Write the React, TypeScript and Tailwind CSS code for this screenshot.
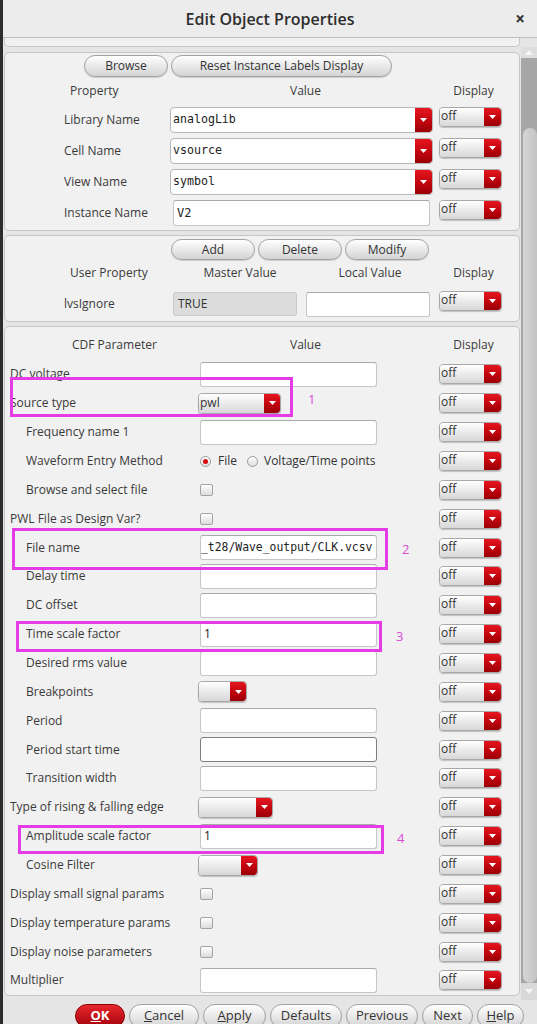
import React from "react";

const SANS = "font-['Open_Sans','DejaVu_Sans',sans-serif]";
const MONO = "font-['DejaVu_Sans_Mono','Liberation_Mono',monospace]";

const RedArrow = ({ className = "" }: { className?: string }) => (
  <div
    className={`flex shrink-0 items-center justify-center rounded-r-[3px] bg-linear-to-b from-[#e6161f] via-[#c4060f] to-[#9b0007] ${className}`}>
    <svg width="7" height="4" viewBox="0 0 7 4">
      <path d="M0 0H7L3.5 4Z" fill="#fff" />
    </svg>
  </div>
);

// the little "off" selector used in every Display column
const OffCombo = ({ className = "" }: { className?: string }) => (
  <div
    className={`flex h-[20px] w-[63px] shrink-0 overflow-hidden rounded-[4px] border border-[#a8a8a8] shadow-[0_1px_1px_rgba(0,0,0,0.2)] ${className}`}>
    <div className="flex-1 bg-linear-to-b from-white to-[#d7d7d7] pl-[1px] text-[12px] leading-[15px] text-[#333]">off</div>
    <RedArrow className="w-[17px]" />
  </div>
);

const SmallCombo = ({ text = "", w }: { text?: string; w: string }) => (
  <div
    className={`flex h-[21px] shrink-0 overflow-hidden rounded-[4px] border border-[#a8a8a8] shadow-[0_1px_1px_rgba(0,0,0,0.2)] ${w}`}>
    <div className="flex-1 bg-linear-to-b from-white to-[#d7d7d7] pl-[1px] text-[12px] leading-[17px] text-[#333]">
      {text}
    </div>
    <RedArrow className="w-[16px]" />
  </div>
);

const ValueCombo = ({ text }: { text: string }) => (
  <div className="flex h-[26px] w-[263px] shrink-0 overflow-hidden rounded-[4px] border border-[#b7b7b7] bg-white">
    <div className={`flex flex-1 items-center pl-[2px] text-[11.6px] text-[#222] ${MONO}`}>{text}</div>
    <RedArrow className="w-[17px]" />
  </div>
);

const Field = ({
  text = "",
  mono = false,
  focus = false,
  className = "",
}: {
  text?: string;
  mono?: boolean;
  focus?: boolean;
  className?: string;
}) => (
  <div
    className={`flex h-[25px] shrink-0 items-center overflow-hidden whitespace-nowrap rounded-[3px] border bg-white text-[#222] ${
      focus ? "border-[#7d7d7d]" : "border-[#c6c6c6] border-t-[#a9a9a9]"
    } ${mono ? `${MONO} text-[11.4px]` : "text-[12px]"} ${className}`}>
    {text}
  </div>
);

const Check = () => (
  <div className="ml-[2px] h-[12px] w-[13px] rounded-[2px] border border-[#a3a3a3] bg-linear-to-b from-white to-[#dcdcdc]" />
);

const Radio = ({ on = false }: { on?: boolean }) => (
  <div className="flex h-[11px] w-[11px] items-center justify-center rounded-full border border-[#9a9a9a] bg-linear-to-b from-white to-[#dedede]">
    {on && <div className="h-[5px] w-[5px] rounded-full bg-[#d30a12]" />}
  </div>
);

const Pill = ({ children, className = "" }: { children: React.ReactNode; className?: string }) => (
  <div
    className={`flex shrink-0 items-center justify-center rounded-[11px] border border-[#a2a2a2] bg-linear-to-b from-white to-[#d4d4d4] text-[#333] shadow-[0_1px_1px_rgba(0,0,0,0.15)] ${className}`}>
    {children}
  </div>
);

const field = <Field className="ml-[2px] w-[177px]" />;
const check = <Check />;

const cdfRows: { label: string; indent?: boolean; value: React.ReactNode }[] = [
  { label: "DC voltage", value: field },
  { label: "Source type", value: <SmallCombo text="pwl" w="w-[83px]" /> },
  { label: "Frequency name 1", indent: true, value: field },
  {
    label: "Waveform Entry Method",
    indent: true,
    value: (
      <div className="ml-[2px] flex items-center text-[12px] text-[#333]">
        <Radio on />
        <span className="ml-[7px]">File</span>
        <div className="ml-[10px]">
          <Radio />
        </div>
        <span className="ml-[6px]">Voltage/Time points</span>
      </div>
    ),
  },
  { label: "Browse and select file", indent: true, value: check },
  { label: "PWL File as Design Var?", value: check },
  {
    label: "File name",
    indent: true,
    value: <Field className="ml-[2px] w-[177px]" mono text="_t28/Wave_output/CLK.vcsv" />,
  },
  { label: "Delay time", indent: true, value: field },
  { label: "DC offset", indent: true, value: field },
  { label: "Time scale factor", indent: true, value: <Field className="ml-[2px] w-[177px] pl-[3px]" text="1" /> },
  { label: "Desired rms value", indent: true, value: field },
  { label: "Breakpoints", indent: true, value: <SmallCombo w="w-[49px]" /> },
  { label: "Period", indent: true, value: field },
  { label: "Period start time", indent: true, value: <Field className="ml-[2px] w-[177px]" focus /> },
  { label: "Transition width", indent: true, value: field },
  { label: "Type of rising & falling edge", value: <SmallCombo w="w-[75px]" /> },
  {
    label: "Amplitude scale factor",
    indent: true,
    value: <Field className="ml-[2px] w-[177px] pl-[3px]" text="1" />,
  },
  { label: "Cosine Filter", indent: true, value: <SmallCombo w="w-[60px]" /> },
  { label: "Display small signal params", value: check },
  { label: "Display temperature params", value: check },
  { label: "Display noise parameters", value: check },
  { label: "Multiplier", value: field },
];

const App = () => {
  return (
    <div className={`flex h-[1024px] w-[537px] overflow-hidden bg-[#e5e5e5] text-[#3a3a3a] ${SANS}`}>
      <div className="w-[3px] shrink-0 bg-[#2c2c2c]" />
      <div className="flex min-w-0 flex-1 flex-col">
        {/* title bar */}
        <div className="grid h-[38px] shrink-0 grid-cols-[1fr_auto_1fr] items-center border-b border-[#bdbdbd] bg-[#ececec]">
          <div />
          <div className="text-[16px] font-semibold text-[#2e2e2e]">Edit Object Properties</div>
          <div className="justify-self-end pr-[12px] text-[17px] font-bold leading-none text-[#333]">×</div>
        </div>

        <div className="flex h-[962px] shrink-0">
          <div className="w-[518px]">
            <div className="ml-[1px] h-[9px] w-[516px] rounded-b-[5px] border-x border-b border-[#c6c6c6] bg-[#f1f1f1]" />

            {/* instance panel */}
            <div className="ml-[1px] mt-[5px] w-[516px] rounded-[5px] border border-[#c6c6c6] bg-[#f1f1f1] pb-[2px] pt-[2px] text-[12px]">
              <div className="flex h-[22px] gap-[3px] pl-[79px]">
                <Pill className="w-[84px]">Browse</Pill>
                <Pill className="w-[221px]">Reset Instance Labels Display</Pill>
              </div>
              <div className="flex h-[27px] items-center">
                <div className="w-[165px] pl-[65px]">Property</div>
                <div className="w-[271px] text-center">Value</div>
                <div className="w-[65px] text-center">Display</div>
              </div>
              {[
                ["Library Name", "analogLib"],
                ["Cell Name", "vsource"],
                ["View Name", "symbol"],
              ].map(([label, value]) => (
                <div key={label} className="flex h-[31px] items-center">
                  <div className="w-[165px] shrink-0 pl-[59px]">{label}</div>
                  <ValueCombo text={value} />
                  <OffCombo className="ml-[6px] self-start mt-[3px]" />
                </div>
              ))}
              <div className="flex h-[31px] items-center">
                <div className="w-[165px] shrink-0 pl-[59px]">Instance Name</div>
                <Field className={`ml-[3px] h-[26px] w-[257px] pl-[3px] text-[11.6px] ${MONO}`} text="V2" />
                <OffCombo className="ml-[9px] self-start mt-[3px]" />
              </div>
            </div>

            {/* user property panel */}
            <div className="ml-[1px] mt-[4px] w-[516px] rounded-[5px] border border-[#c6c6c6] bg-[#f1f1f1] pb-[2px] pt-[3px] text-[12px]">
              <div className="flex h-[21px] gap-[3px] pl-[166px]">
                <Pill className="w-[84px]">Add</Pill>
                <Pill className="w-[84px]">Delete</Pill>
                <Pill className="w-[84px]">Modify</Pill>
              </div>
              <div className="flex h-[26px] items-center">
                <div className="w-[165px] pl-[65px]">User Property</div>
                <div className="w-[140px] text-center">Master Value</div>
                <div className="w-[120px] text-center">Local Value</div>
                <div className="ml-[11px] w-[65px] text-center">Display</div>
              </div>
              <div className="mt-[3px] flex h-[30px] items-center">
                <div className="w-[165px] shrink-0 pl-[59px]">lvsIgnore</div>
                <div className="ml-[3px] flex h-[24px] w-[124px] items-center rounded-[3px] border border-[#c9c9c9] bg-[#dcdcdc] pl-[4px] text-[#333]">
                  TRUE
                </div>
                <Field className="ml-[9px] h-[24px] w-[124px]" />
                <OffCombo className="ml-[9px] self-start mt-[2px]" />
              </div>
            </div>

            {/* CDF parameter panel */}
            <div className="relative ml-[1px] mt-[4px] w-[516px] rounded-[5px] border border-[#c6c6c6] bg-[#f1f1f1] text-[12px]">
              <div className="flex h-[33px] items-center pt-[3px]">
                <div className="w-[165px] pl-[67px]">CDF Parameter</div>
                <div className="w-[271px] text-center">Value</div>
                <div className="w-[65px] text-center">Display</div>
              </div>
              {cdfRows.map((r) => (
                <div key={r.label} className="flex h-[28.86px] items-center">
                  <div className={`w-[193px] shrink-0 whitespace-nowrap ${r.indent ? "pl-[21px]" : "pl-[5px]"}`}>
                    {r.label}
                  </div>
                  <div className="flex w-[241px] shrink-0 items-center">{r.value}</div>
                  <OffCombo />
                </div>
              ))}

              {/* magenta annotations */}
              <div className="absolute left-[5px] top-[50px] h-[40px] w-[283px] border-[3px] border-[#e63ce6]" />
              <div className="absolute left-[7px] top-[201px] h-[42px] w-[376px] border-[3px] border-[#e63ce6]" />
              <div className="absolute left-[11px] top-[294px] h-[31px] w-[366px] border-[3px] border-[#e63ce6]" />
              <div className="absolute left-[13px] top-[498px] h-[29px] w-[366px] border-[3px] border-[#e63ce6]" />
              <div className="absolute left-[303px] top-[64px] text-[13px] leading-[16px] text-[#d84ad8]">1</div>
              <div className="absolute left-[397px] top-[214px] text-[13px] leading-[16px] text-[#d84ad8]">2</div>
              <div className="absolute left-[391px] top-[301px] text-[13px] leading-[16px] text-[#d84ad8]">3</div>
              <div className="absolute left-[392px] top-[503px] text-[13px] leading-[16px] text-[#d84ad8]">4</div>
            </div>
          </div>

          {/* scrollbar */}
          <div className="flex w-[16px] shrink-0 flex-col">
            <div className="h-[9px]" />
            <div className="flex h-[11px] items-center justify-center bg-[#dedede]">
              <svg width="8" height="5" viewBox="0 0 8 5">
                <path d="M0 5L4 0L8 5Z" fill="#f7f7f7" />
              </svg>
            </div>
            <div className="flex flex-1 flex-col bg-[#a6a6a6] pt-[70px]">
              <div className="ml-[2px] flex-1 rounded-[7px] bg-linear-to-r from-[#d6d6d6] to-[#c3c3c3]" />
            </div>
            <div className="flex h-[17px] items-center justify-center bg-[#d9d9d9]">
              <svg width="8" height="5" viewBox="0 0 8 5">
                <path d="M0 0L4 5L8 0Z" fill="#f5f5f5" />
              </svg>
            </div>
          </div>
        </div>

        {/* dialog buttons */}
        <div className="flex gap-[4px] pl-[72px] pt-[4px] text-[13px]">
          <div className="flex h-[24px] w-[50px] items-center justify-center rounded-[12px] border border-[#8b0000] bg-linear-to-b from-[#e8262d] to-[#a5000a] font-bold text-white">
            <span className="underline">O</span>K
          </div>
          <Pill className="h-[24px] w-[70px] rounded-[12px]">
            <span className="underline">C</span>ancel
          </Pill>
          <Pill className="h-[24px] w-[63px] rounded-[12px]">
            <span className="underline">A</span>pply
          </Pill>
          <Pill className="h-[24px] w-[72px] rounded-[12px]">Defaults</Pill>
          <Pill className="h-[24px] w-[72px] rounded-[12px]">Previous</Pill>
          <Pill className="h-[24px] w-[51px] rounded-[12px]">Next</Pill>
          <Pill className="h-[24px] w-[47px] rounded-[12px]">
            <span className="underline">H</span>elp
          </Pill>
        </div>
      </div>
    </div>
  );
};

export default App;
